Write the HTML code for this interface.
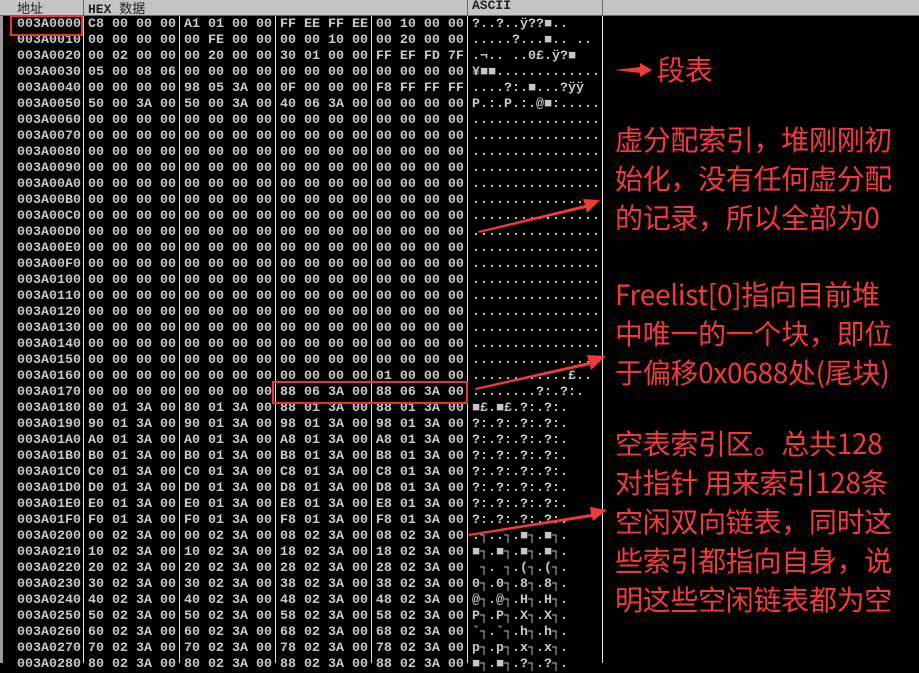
<!DOCTYPE html>
<html><head><meta charset="utf-8"><style>
*{margin:0;padding:0}
body{width:919px;height:663px;background:#000;overflow:hidden;position:relative;font-family:"Liberation Mono",monospace}
.hdr{position:absolute;top:0;left:0;width:919px;height:15px;background:#c4c4c4;border-bottom:1px solid #6a6a6a}
.hs{position:absolute;top:0;height:16px;width:1px;background:#6a6a6a}
.ht{position:absolute;top:-2px;font:bold 13px "Liberation Mono","Noto Sans CJK SC",monospace;color:#222}
pre{position:absolute;top:17px;font:bold 13.333px/16px "Liberation Mono",monospace;color:#c8c8c8;white-space:pre}
.vl{position:absolute;top:16px;height:647px;width:1px;background:#e8e8e8}
.box{position:absolute;border:2px solid #f03030}
.note{position:absolute;left:615px;color:#f23a3a;font:28px/39px "Noto Sans CJK SC","Liberation Sans",sans-serif;white-space:nowrap;letter-spacing:-0.3px}
</style></head><body>
<div class="hdr"></div>
<div class="hs" style="left:83px"></div>
<div class="hs" style="left:467px"></div>
<div class="hs" style="left:602px"></div>
<div class="ht" style="left:17px;font-weight:normal">地址</div>
<div class="ht" style="left:88px">HEX <span style="font-weight:normal">数据</span></div>
<div class="ht" style="left:472px">ASCII</div>
<div style="position:absolute;left:0;top:16px;width:3px;height:647px;background:#9a9a9a"></div>
<pre style="left:17px">003A0000
003A0010
003A0020
003A0030
003A0040
003A0050
003A0060
003A0070
003A0080
003A0090
003A00A0
003A00B0
003A00C0
003A00D0
003A00E0
003A00F0
003A0100
003A0110
003A0120
003A0130
003A0140
003A0150
003A0160
003A0170
003A0180
003A0190
003A01A0
003A01B0
003A01C0
003A01D0
003A01E0
003A01F0
003A0200
003A0210
003A0220
003A0230
003A0240
003A0250
003A0260
003A0270
003A0280</pre>
<pre style="left:88px">C8 00 00 00 A1 01 00 00 FF EE FF EE 00 10 00 00
00 00 00 00 00 FE 00 00 00 00 10 00 00 20 00 00
00 02 00 00 00 20 00 00 30 01 00 00 FF EF FD 7F
05 00 08 06 00 00 00 00 00 00 00 00 00 00 00 00
00 00 00 00 98 05 3A 00 0F 00 00 00 F8 FF FF FF
50 00 3A 00 50 00 3A 00 40 06 3A 00 00 00 00 00
00 00 00 00 00 00 00 00 00 00 00 00 00 00 00 00
00 00 00 00 00 00 00 00 00 00 00 00 00 00 00 00
00 00 00 00 00 00 00 00 00 00 00 00 00 00 00 00
00 00 00 00 00 00 00 00 00 00 00 00 00 00 00 00
00 00 00 00 00 00 00 00 00 00 00 00 00 00 00 00
00 00 00 00 00 00 00 00 00 00 00 00 00 00 00 00
00 00 00 00 00 00 00 00 00 00 00 00 00 00 00 00
00 00 00 00 00 00 00 00 00 00 00 00 00 00 00 00
00 00 00 00 00 00 00 00 00 00 00 00 00 00 00 00
00 00 00 00 00 00 00 00 00 00 00 00 00 00 00 00
00 00 00 00 00 00 00 00 00 00 00 00 00 00 00 00
00 00 00 00 00 00 00 00 00 00 00 00 00 00 00 00
00 00 00 00 00 00 00 00 00 00 00 00 00 00 00 00
00 00 00 00 00 00 00 00 00 00 00 00 00 00 00 00
00 00 00 00 00 00 00 00 00 00 00 00 00 00 00 00
00 00 00 00 00 00 00 00 00 00 00 00 00 00 00 00
00 00 00 00 00 00 00 00 00 00 00 00 01 00 00 00
00 00 00 00 00 00 00 00 88 06 3A 00 88 06 3A 00
80 01 3A 00 80 01 3A 00 88 01 3A 00 88 01 3A 00
90 01 3A 00 90 01 3A 00 98 01 3A 00 98 01 3A 00
A0 01 3A 00 A0 01 3A 00 A8 01 3A 00 A8 01 3A 00
B0 01 3A 00 B0 01 3A 00 B8 01 3A 00 B8 01 3A 00
C0 01 3A 00 C0 01 3A 00 C8 01 3A 00 C8 01 3A 00
D0 01 3A 00 D0 01 3A 00 D8 01 3A 00 D8 01 3A 00
E0 01 3A 00 E0 01 3A 00 E8 01 3A 00 E8 01 3A 00
F0 01 3A 00 F0 01 3A 00 F8 01 3A 00 F8 01 3A 00
00 02 3A 00 00 02 3A 00 08 02 3A 00 08 02 3A 00
10 02 3A 00 10 02 3A 00 18 02 3A 00 18 02 3A 00
20 02 3A 00 20 02 3A 00 28 02 3A 00 28 02 3A 00
30 02 3A 00 30 02 3A 00 38 02 3A 00 38 02 3A 00
40 02 3A 00 40 02 3A 00 48 02 3A 00 48 02 3A 00
50 02 3A 00 50 02 3A 00 58 02 3A 00 58 02 3A 00
60 02 3A 00 60 02 3A 00 68 02 3A 00 68 02 3A 00
70 02 3A 00 70 02 3A 00 78 02 3A 00 78 02 3A 00
80 02 3A 00 80 02 3A 00 88 02 3A 00 88 02 3A 00</pre>
<pre style="left:472px">?..?..ÿ??■..
.....?...■.. ..
.¬.. ..0£.ÿ?■
¥■■.............
....?:.■...?ÿÿ
P.:.P.:.@■:.....
................
................
................
................
................
................
................
................
................
................
................
................
................
................
................
................
............£..
........?:.?:.
■£.■£.?:.?:.
?:.?:.?:.?:.
?:.?:.?:.?:.
?:.?:.?:.?:.
?:.?:.?:.?:.
?:.?:.?:.?:.
?:.?:.?:.?:.
?:.?:.?:.?:.
.┐..┐.■┐.■┐.
■┐.■┐.■┐.■┐.
 ┐. ┐.(┐.(┐.
0┐.0┐.8┐.8┐.
@┐.@┐.H┐.H┐.
P┐.P┐.X┐.X┐.
`┐.`┐.h┐.h┐.
p┐.p┐.x┐.x┐.
■┐.■┐.?┐.?┐.</pre>
<div class="vl" style="left:83px"></div>
<div class="vl" style="left:179px"></div>
<div class="vl" style="left:275px"></div>
<div class="vl" style="left:371px"></div>
<div class="vl" style="left:467px"></div>
<div class="vl" style="left:602px"></div>
<div class="box" style="left:10px;top:15px;width:69px;height:17px"></div>
<div class="box" style="left:272px;top:381px;width:192px;height:19px"></div>
<svg style="position:absolute;left:0;top:0" width="919" height="663">
<g fill="#f03a3a">
<polygon points="614,70 640,67 640,63 652,70 640,77 640,73"/>
<polygon points="478,231 585,205 583,199 600,200 587,213 586,208 479,233"/>
<polygon points="475,388 589,362 587,355 606,356 591,370 590,365 476,390"/>
<polygon points="468,534 591,514 590,507 607,510 593,521 592,517 469,536"/>
</g>
</svg>
<div class="note" style="left:657px;top:50px">段表</div>
<div class="note" style="top:120px">虚分配索引，堆刚刚初<br>始化，没有任何虚分配<br>的记录，所以全部为0</div>
<div class="note" style="top:275px">Freelist[0]指向目前堆<br>中唯一的一个块，即位<br>于偏移0x0688处(尾块)</div>
<div class="note" style="top:424px">空表索引区。总共128<br>对指针 用来索引128条<br>空闲双向链表，同时这<br>些索引都指向自身，说<br>明这些空闲链表都为空</div>
</body></html>
